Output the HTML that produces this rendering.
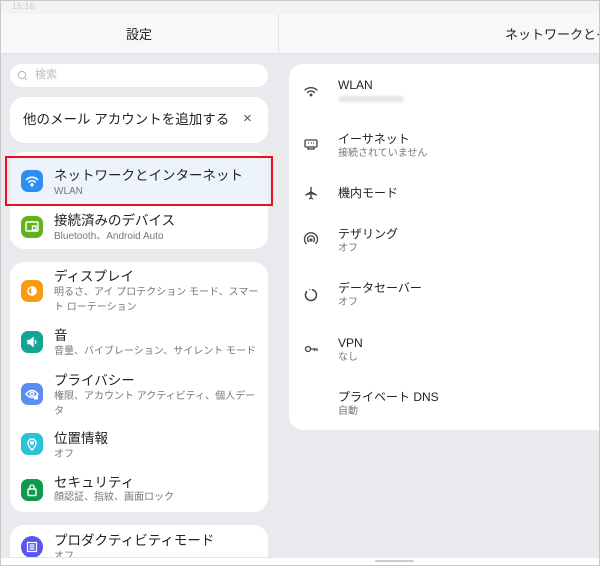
<!DOCTYPE html><html><head><meta charset="utf-8"><style>
*{margin:0;padding:0;box-sizing:border-box}
body{width:600px;height:566px;overflow:hidden;background:#e9eaee;font-family:"Liberation Sans","Noto Sans CJK JP",sans-serif;position:relative;color:#222}
.a{position:absolute}
.card{position:absolute;background:#fff;border-radius:14px}
.t{position:absolute;font-size:13.5px;color:#222;white-space:nowrap;line-height:16px}
.s{position:absolute;font-size:10px;color:#777;white-space:nowrap;line-height:15px}
.ic{position:absolute;width:22px;height:22px;border-radius:7px;left:21px}
.ic svg{position:absolute;left:4px;top:4px}
.ri{position:absolute;left:302px;width:18px;height:18px}
</style></head><body>
<div class="a" style="left:0;top:0;width:600px;height:566px;border:1px solid #c8c8c8;z-index:9;pointer-events:none"></div>
<div class="a" style="left:0;top:0;width:600px;height:14px;background:#f3f3f3"></div>
<div class="a" style="left:12px;top:1px;font-size:9px;line-height:11px;color:#ccc">16:16</div>
<div class="a" style="left:0;top:14px;width:600px;height:40px;background:#f7f8fa;border-bottom:1px solid #ddd"></div>
<div class="a" style="left:278px;top:14px;width:1px;height:40px;background:#e4e4e4"></div>
<div class="t" style="left:126px;top:27px;font-size:13px">設定</div>
<div class="t" style="left:505px;top:27px;font-size:13px">ネットワークとイ</div>

<div class="card" style="left:10px;top:64px;width:258px;height:23px;border-radius:12px"></div>
<svg class="a" style="left:17px;top:70px" width="11" height="11" viewBox="0 0 11 11"><circle cx="5" cy="5" r="3.7" fill="none" stroke="#bbb" stroke-width="1.2"/><path d="M8 8l2 2" stroke="#bbb" stroke-width="1.2"/></svg>
<div class="a" style="left:35px;top:69px;font-size:11px;line-height:13px;color:#bbb">検索</div>

<div class="card" style="left:10px;top:97px;width:258px;height:46px"></div>
<div class="t" style="left:23px;top:112px;font-size:13.5px">他のメール アカウントを追加する</div>
<div class="a" style="left:243px;top:111px;font-size:15px;line-height:16px;color:#555">×</div>

<div class="card" style="left:10px;top:152px;width:258px;height:97px"></div>
<div class="a" style="left:10px;top:157px;width:258px;height:48px;background:#edf3fd"></div>
<div class="a" style="left:5px;top:156px;width:268px;height:50px;border:2.5px solid #e8101a"></div>
<div class="ic" style="top:170px;background:#2f8ef3"><svg width="14" height="14" viewBox="0 0 14 14" fill="none" stroke="#fff" stroke-width="1.6" stroke-linecap="round"><path d="M1.5 5.5a8 8 0 0 1 11 0"/><path d="M3.7 8a5 5 0 0 1 6.6 0"/><circle cx="7" cy="10.8" r=".9" fill="#fff"/></svg></div>
<div class="t" style="left:54px;top:168px">ネットワークとインターネット</div>
<div class="s" style="left:54px;top:184px">WLAN</div>
<div class="ic" style="top:216px;background:#63b11d"><svg width="14" height="14" viewBox="0 0 14 14" fill="none" stroke="#fff" stroke-width="1.4"><rect x="1" y="2" width="12" height="9" rx="1"/><rect x="7.5" y="6" width="3.5" height="4"/></svg></div>
<div class="t" style="left:54px;top:213px">接続済みのデバイス</div>
<div class="s" style="left:54px;top:229px">Bluetooth、Android Auto</div>

<div class="card" style="left:10px;top:262px;width:258px;height:250px"></div>
<div class="ic" style="top:280px;background:#f89b12"><svg width="14" height="14" viewBox="0 0 14 14" fill="none" stroke="#fff" stroke-width="1.5"><circle cx="7" cy="7" r="4"/><path d="M7 3a4 4 0 0 1 0 8z" fill="#fff"/></svg></div>
<div class="t" style="left:54px;top:269px">ディスプレイ</div>
<div class="s" style="left:54px;top:285px">明るさ、アイ プロテクション モード、スマー<br>ト ローテーション</div>
<div class="ic" style="top:331px;background:#13a596"><svg width="14" height="14" viewBox="0 0 14 14" fill="none" stroke="#fff" stroke-width="1.4"><path d="M3 5.5h2l3-2.5v8l-3-2.5H3z" fill="#fff"/><path d="M10 5a3 3 0 0 1 0 4"/></svg></div>
<div class="t" style="left:54px;top:328px">音</div>
<div class="s" style="left:54px;top:344px">音量、バイブレーション、サイレント モード</div>
<div class="ic" style="top:383px;background:#5a8ef0"><svg width="14" height="14" viewBox="0 0 14 14" fill="none" stroke="#fff" stroke-width="1.4"><path d="M1 7q6-7 12 0q-6 7-12 0z"/><circle cx="7" cy="7" r="1.7"/><rect x="9" y="8.5" width="4" height="4" fill="#fff" stroke="none"/></svg></div>
<div class="t" style="left:54px;top:373px">プライバシー</div>
<div class="s" style="left:54px;top:389px">権限、アカウント アクティビティ、個人デー<br>タ</div>
<div class="ic" style="top:433px;background:#2bc3d8"><svg width="14" height="14" viewBox="0 0 14 14" fill="none" stroke="#fff" stroke-width="1.4"><path d="M7 13s4-4 4-7a4 4 0 0 0-8 0c0 3 4 7 4 7z"/><circle cx="7" cy="6" r="1.3"/></svg></div>
<div class="t" style="left:54px;top:431px">位置情報</div>
<div class="s" style="left:54px;top:447px">オフ</div>
<div class="ic" style="top:479px;background:#0f9a4d"><svg width="14" height="14" viewBox="0 0 14 14" fill="none" stroke="#fff" stroke-width="1.4"><rect x="3" y="6" width="8" height="6.5" rx="1"/><path d="M4.8 6V4.3a2.2 2.2 0 0 1 4.4 0V6"/></svg></div>
<div class="t" style="left:54px;top:475px">セキュリティ</div>
<div class="s" style="left:54px;top:490px">顔認証、指紋、画面ロック</div>

<div class="card" style="left:10px;top:525px;width:258px;height:41px;border-radius:14px 14px 0 0"></div>
<div class="ic" style="top:536px;background:#5b55ef;border-radius:11px"><svg width="14" height="14" viewBox="0 0 14 14" fill="none" stroke="#fff" stroke-width="1.2"><rect x="2.5" y="2.5" width="9" height="9"/><path d="M4.5 5h5M4.5 7h5M4.5 9h5"/></svg></div>
<div class="t" style="left:54px;top:533px">プロダクティビティモード</div>
<div class="s" style="left:54px;top:549px">オフ</div>

<div class="card" style="left:289px;top:64px;width:330px;height:366px"></div>
<svg class="ri" style="top:82px" viewBox="0 0 18 18" fill="none" stroke="#444" stroke-width="1.3" stroke-linecap="round"><path d="M3 8a9 9 0 0 1 12 0"/><path d="M5.5 10.5a5 5 0 0 1 7 0"/><circle cx="9" cy="13" r=".8" fill="#444"/></svg>
<div class="t" style="left:338px;top:78px;font-size:12px;line-height:15px">WLAN</div>
<div class="a" style="left:338px;top:96px;width:66px;height:6px;background:#e6e6e6;border-radius:3px;filter:blur(1px)"></div>
<svg class="ri" style="top:136px" viewBox="0 0 18 18" fill="none" stroke="#444" stroke-width="1.3"><rect x="3" y="4" width="12" height="7" rx="1"/><path d="M6 11v2h6v-2M6 7h1M9 7h1M11 7h1"/></svg>
<div class="t" style="left:338px;top:132px;font-size:12px;line-height:15px">イーサネット</div>
<div class="s" style="left:338px;top:146px">接続されていません</div>
<svg class="ri" style="top:184px" viewBox="0 0 18 18" fill="#444"><path d="M8.3 3h1.4v4.5l5 3v1.2l-5-1.5v3.3l1.5 1.1v1l-2.2-.7-2.2.7v-1l1.5-1.1v-3.3l-5 1.5v-1.2l5-3z"/></svg>
<div class="t" style="left:338px;top:186px;font-size:12px;line-height:15px">機内モード</div>
<svg class="ri" style="top:231px" viewBox="0 0 18 18" fill="none" stroke="#444" stroke-width="1.3"><path d="M4.5 13a6.5 6.5 0 1 1 9 0"/><path d="M6.8 11a3.5 3.5 0 1 1 4.4 0"/><circle cx="9" cy="9" r="1"/></svg>
<div class="t" style="left:338px;top:227px;font-size:12px;line-height:15px">テザリング</div>
<div class="s" style="left:338px;top:241px">オフ</div>
<svg class="ri" style="top:286px" viewBox="0 0 18 18" fill="none" stroke="#444" stroke-width="1.5"><path d="M10 3.6a5.5 5.5 0 1 1-5 1.6"/><path d="M7.5 3.7l.8-.2"/></svg>
<div class="t" style="left:338px;top:281px;font-size:12px;line-height:15px">データセーバー</div>
<div class="s" style="left:338px;top:295px">オフ</div>
<svg class="ri" style="top:340px" viewBox="0 0 18 18" fill="none" stroke="#444" stroke-width="1.3"><circle cx="6" cy="9" r="2.5"/><path d="M8.5 9H15v2M12.5 9v2"/></svg>
<div class="t" style="left:338px;top:336px;font-size:12px;line-height:15px">VPN</div>
<div class="s" style="left:338px;top:350px">なし</div>
<div class="t" style="left:338px;top:390px;font-size:12px;line-height:15px">プライベート DNS</div>
<div class="s" style="left:338px;top:404px">自動</div>

<div class="a" style="left:0;top:557px;width:600px;height:9px;background:#fff;border-top:1px solid #e6e6e6"></div>
<div class="a" style="left:375px;top:560px;width:39px;height:2px;background:#ccc;border-radius:1px"></div>
</body></html>
